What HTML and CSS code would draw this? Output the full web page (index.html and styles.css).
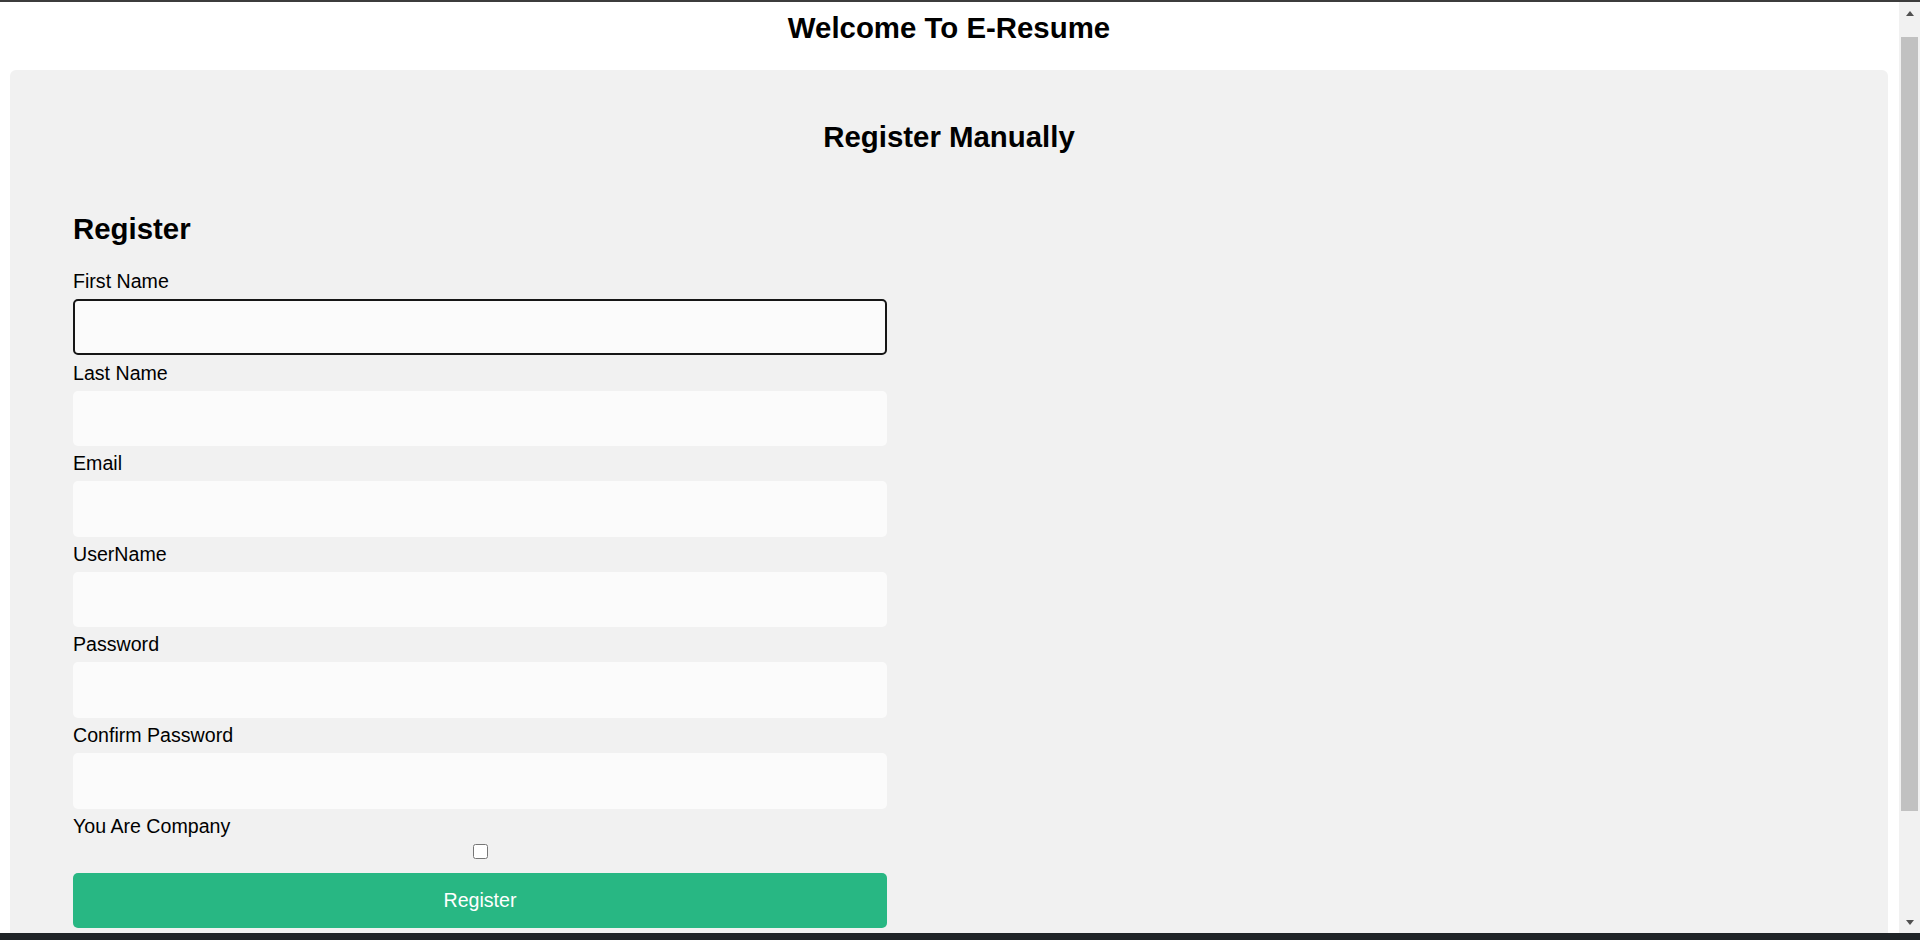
FILE: index.html
```html
<!DOCTYPE html>
<html lang="en">
<head>
<meta charset="utf-8">
<title>E-Resume</title>
<link rel="stylesheet" href="styles.css">
</head>
<body>
<div class="topline"></div>
<div class="viewport">
  <div class="page">
    <h1 class="title">Welcome To E-Resume</h1>
    <div class="panel">
      <h2 class="panel-title">Register Manually</h2>
      <form class="form">
        <h2 class="form-title">Register</h2>
        <label class="label">First Name</label>
        <input class="field field-active" type="text">
        <label class="label">Last Name</label>
        <input class="field" type="text">
        <label class="label">Email</label>
        <input class="field" type="email">
        <label class="label">UserName</label>
        <input class="field" type="text">
        <label class="label">Password</label>
        <input class="field" type="password">
        <label class="label">Confirm Password</label>
        <input class="field" type="password">
        <label class="label">You Are Company</label>
        <input class="check" type="checkbox">
        <button class="btn" type="button">Register</button>
      </form>
    </div>
  </div>
  <div class="scrollbar">
    <div class="sb-btn"><span class="arrow-up"></span></div>
    <div class="sb-thumb"></div>
    <div class="sb-fill"></div>
    <div class="sb-btn"><span class="arrow-down"></span></div>
  </div>
</div>
<div class="taskbar"></div>
</body>
</html>
```

FILE: styles.css
```css
* { box-sizing: border-box; }

html, body {
  margin: 0;
  padding: 0;
  height: 940px;
  overflow: hidden;
  background: #ffffff;
}

body {
  display: flex;
  flex-direction: column;
  font-family: "Liberation Sans", Arial, sans-serif;
  color: #000;
}

.topline {
  height: 2px;
  background: #3c3c3c;
  flex: none;
}

.viewport {
  flex: 1;
  display: flex;
  min-height: 0;
}

.page {
  flex: 1;
  min-width: 0;
  overflow: hidden;
  padding: 9px 11px 0 10px;
}

.title {
  margin: 0 0 25.3px;
  font-size: 29.4px;
  line-height: 33.8px;
  font-weight: bold;
  text-align: center;
}

.panel {
  background: #f1f1f1;
  border-radius: 6px;
  padding: 50px 0 40px 63px;
}

.panel-title {
  margin: 0 0 58.2px -63px;
  font-size: 29.4px;
  line-height: 33.8px;
  font-weight: bold;
  text-align: center;
}

.form {
  width: 814px;
  display: flex;
  flex-direction: column;
}

.form-title {
  margin: 0 0 23.7px;
  font-size: 29.4px;
  line-height: 33.8px;
  font-weight: bold;
}

.label {
  font-size: 19.6px;
  line-height: 23px;
  height: 23px;
}

.field {
  height: 55.6px;
  margin: 6px 0;
  border: none;
  border-radius: 5px;
  background: #fbfbfb;
  font-family: inherit;
  font-size: 19.6px;
  padding: 0 12px;
  outline: none;
}

.field-active {
  height: 56px;
  margin-bottom: 7px;
  border: 2px solid #161616;
}

.check {
  width: 15px;
  height: 15px;
  margin: 6px auto 14px;
  align-self: center;
}

.btn {
  height: 55px;
  border: none;
  border-radius: 5px;
  background: #28b783;
  color: #ffffff;
  font-family: inherit;
  font-size: 19.6px;
  padding: 0;
}

.scrollbar {
  width: 21px;
  flex: none;
  background: #f1f1f1;
  display: flex;
  flex-direction: column;
}

.sb-btn {
  height: 21px;
  flex: none;
  display: flex;
  align-items: center;
  justify-content: center;
}

.sb-btn:first-child {
  height: 23px;
}

.sb-thumb {
  flex: none;
  height: 774px;
  margin: 11.7px 2px 0 2px;
  background: #c1c1c1;
}

.sb-fill {
  flex: 1;
}

.arrow-up {
  width: 0;
  height: 0;
  border-left: 4.5px solid transparent;
  border-right: 4.5px solid transparent;
  border-bottom: 5px solid #505050;
}

.arrow-down {
  width: 0;
  height: 0;
  border-left: 4.5px solid transparent;
  border-right: 4.5px solid transparent;
  border-top: 5px solid #505050;
}

.taskbar {
  height: 7px;
  flex: none;
  background: #1f2427;
}
```
